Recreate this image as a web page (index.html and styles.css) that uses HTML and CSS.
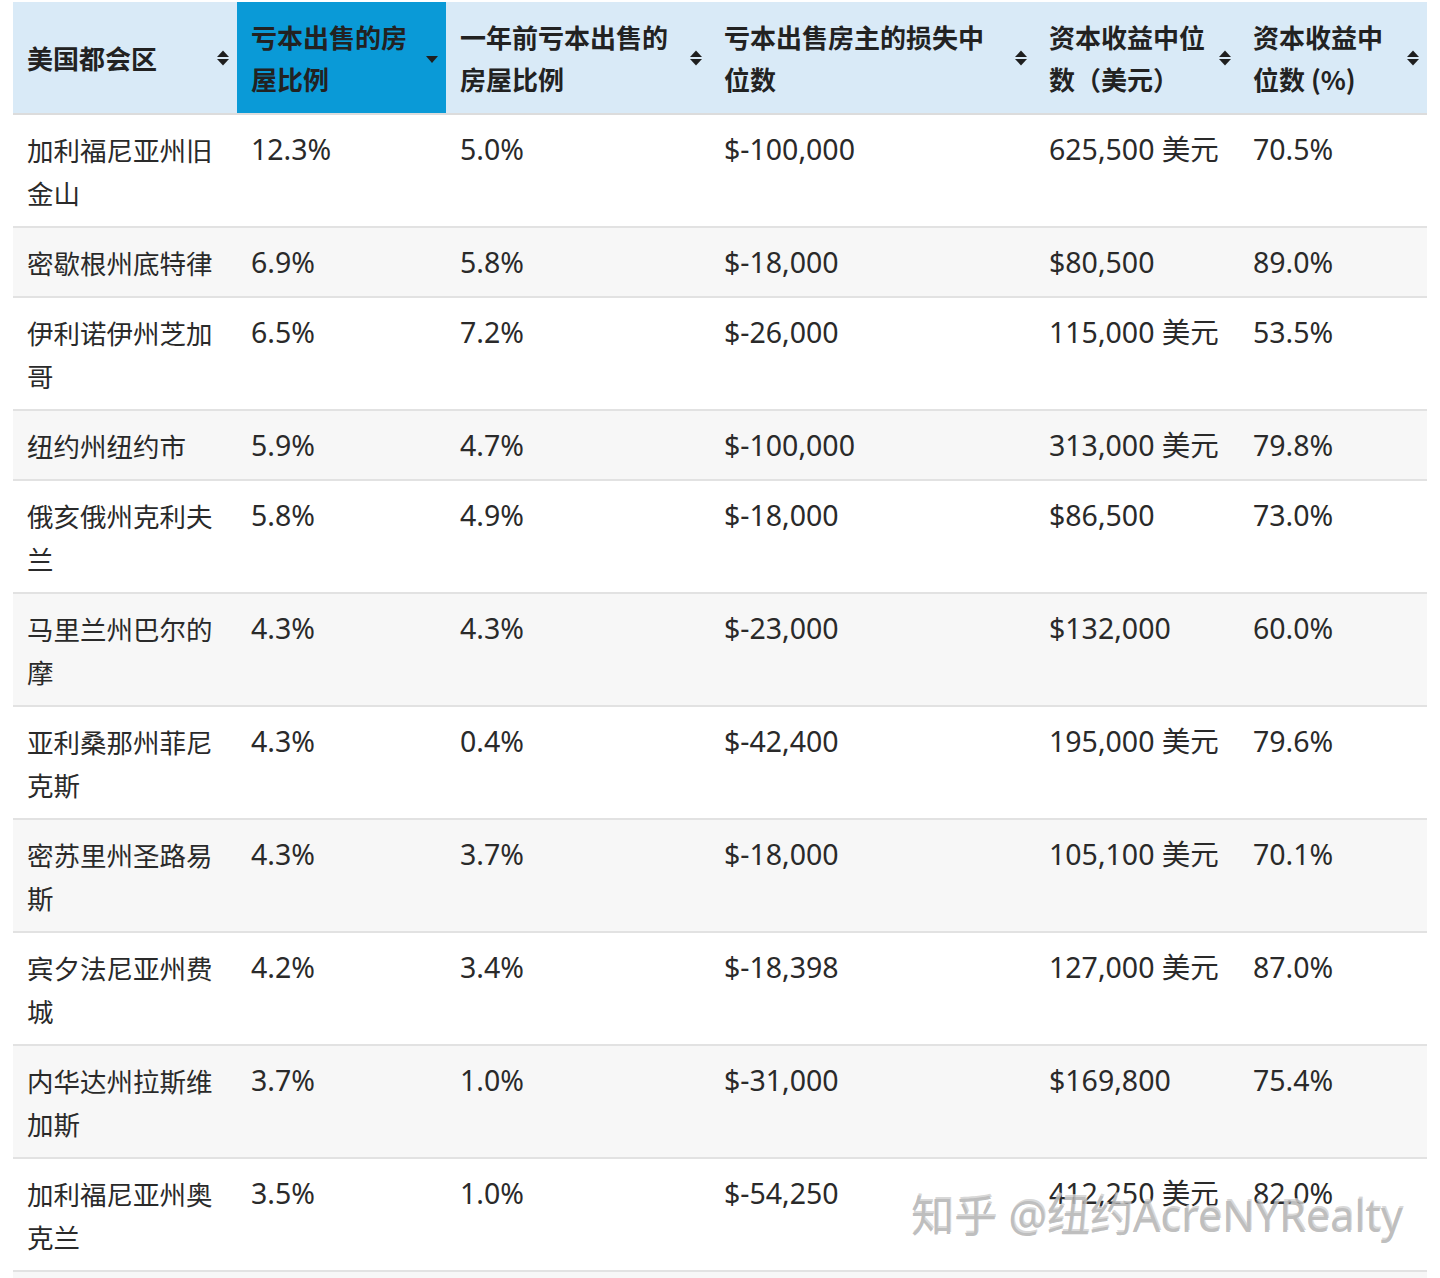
FILE: index.html
```html
<!DOCTYPE html>
<html lang="zh-CN">
<head>
<meta charset="utf-8">
<title>亏本出售的房屋比例</title>
<link rel="stylesheet" href="styles.css">
</head>
<body>
<div class="page">
  <table class="data">
    <colgroup>
      <col class="c1"><col class="c2"><col class="c3"><col class="c4"><col class="c5"><col class="c6">
    </colgroup>
    <thead>
      <tr>
        <th><div class="th-inner"><span class="label">美国都会区</span><svg class="sort" viewBox="0 0 12 16"><polygon points="0,7 6,0.5 12,7"/><polygon points="0,9 6,15.5 12,9"/></svg></div></th>
        <th class="active"><div class="th-inner"><span class="label">亏本出售的房屋比例</span><svg class="sort-down" viewBox="0 0 12 7"><polygon points="0,0 12,0 6,7"/></svg></div></th>
        <th><div class="th-inner"><span class="label">一年前亏本出售的房屋比例</span><svg class="sort" viewBox="0 0 12 16"><polygon points="0,7 6,0.5 12,7"/><polygon points="0,9 6,15.5 12,9"/></svg></div></th>
        <th><div class="th-inner"><span class="label">亏本出售房主的损失中位数</span><svg class="sort" viewBox="0 0 12 16"><polygon points="0,7 6,0.5 12,7"/><polygon points="0,9 6,15.5 12,9"/></svg></div></th>
        <th><div class="th-inner"><span class="label">资本收益中位数（美元）</span><svg class="sort" viewBox="0 0 12 16"><polygon points="0,7 6,0.5 12,7"/><polygon points="0,9 6,15.5 12,9"/></svg></div></th>
        <th><div class="th-inner"><span class="label">资本收益中位数 (%)</span><svg class="sort" viewBox="0 0 12 16"><polygon points="0,7 6,0.5 12,7"/><polygon points="0,9 6,15.5 12,9"/></svg></div></th>
      </tr>
    </thead>
    <tbody>
      <tr><td class="metro">加利福尼亚州旧金山</td><td>12.3%</td><td>5.0%</td><td>$-100,000</td><td>625,500 美元</td><td>70.5%</td></tr>
      <tr><td class="metro">密歇根州底特律</td><td>6.9%</td><td>5.8%</td><td>$-18,000</td><td>$80,500</td><td>89.0%</td></tr>
      <tr><td class="metro">伊利诺伊州芝加哥</td><td>6.5%</td><td>7.2%</td><td>$-26,000</td><td>115,000 美元</td><td>53.5%</td></tr>
      <tr><td class="metro">纽约州纽约市</td><td>5.9%</td><td>4.7%</td><td>$-100,000</td><td>313,000 美元</td><td>79.8%</td></tr>
      <tr><td class="metro">俄亥俄州克利夫兰</td><td>5.8%</td><td>4.9%</td><td>$-18,000</td><td>$86,500</td><td>73.0%</td></tr>
      <tr><td class="metro">马里兰州巴尔的摩</td><td>4.3%</td><td>4.3%</td><td>$-23,000</td><td>$132,000</td><td>60.0%</td></tr>
      <tr><td class="metro">亚利桑那州菲尼克斯</td><td>4.3%</td><td>0.4%</td><td>$-42,400</td><td>195,000 美元</td><td>79.6%</td></tr>
      <tr><td class="metro">密苏里州圣路易斯</td><td>4.3%</td><td>3.7%</td><td>$-18,000</td><td>105,100 美元</td><td>70.1%</td></tr>
      <tr><td class="metro">宾夕法尼亚州费城</td><td>4.2%</td><td>3.4%</td><td>$-18,398</td><td>127,000 美元</td><td>87.0%</td></tr>
      <tr><td class="metro">内华达州拉斯维加斯</td><td>3.7%</td><td>1.0%</td><td>$-31,000</td><td>$169,800</td><td>75.4%</td></tr>
      <tr><td class="metro">加利福尼亚州奥克兰</td><td>3.5%</td><td>1.0%</td><td>$-54,250</td><td>412,250 美元</td><td>82.0%</td></tr>
      <tr><td class="metro">&nbsp;</td><td>&nbsp;</td><td>&nbsp;</td><td>&nbsp;</td><td>&nbsp;</td><td>&nbsp;</td></tr>
    </tbody>
  </table>
  <div class="watermark">知乎 @纽约AcreNYRealty</div>
</div>
</body>
</html>
```

FILE: styles.css
```css
html, body {
  margin: 0;
  padding: 0;
  background: #ffffff;
}

body {
  font-family: "Noto Sans", "Noto Sans CJK SC", sans-serif;
  color: #2a2a2a;
}

.page {
  position: relative;
  padding: 2px 13px 0 13px;
  height: 1276px;
  overflow: hidden;
}

.data {
  width: 1414px;
  table-layout: fixed;
  border-collapse: collapse;
  border-spacing: 0;
}

.c1 { width: 224px; }
.c2 { width: 209px; }
.c3 { width: 264px; }
.c4 { width: 325px; }
.c5 { width: 204px; }
.c6 { width: 188px; }

.data th {
  background: #d9eaf7;
  padding: 14px 8px 13px 14px;
  text-align: left;
  vertical-align: middle;
  font-family: "Noto Sans CJK SC", "Noto Sans", sans-serif;
  font-weight: 700;
  font-size: 26px;
  line-height: 42px;
  color: #222222;
  border-bottom: 2px solid #dcdcdc;
}

.data th.active {
  background: #0a9ad7;
}

.th-inner {
  display: flex;
  align-items: center;
  gap: 6px;
}

.label {
  flex: 1;
  min-width: 0;
}

.sort {
  flex: none;
  width: 12px;
  height: 16px;
  fill: #1f1f1f;
}

.sort-down {
  flex: none;
  width: 12px;
  height: 7px;
  margin-top: 2px;
  fill: #1f1f1f;
}

.data td {
  padding: 13px 14px 12px 14px;
  vertical-align: top;
  font-size: 28.5px;
  line-height: 43px;
  color: #2a2a2a;
  border-bottom: 2px solid #e2e2e2;
}

.data td.metro {
  font-family: "Noto Sans CJK SC", sans-serif;
  font-size: 26.5px;
}

.data tbody tr:nth-child(even) td {
  background: #f7f7f7;
}

.watermark {
  position: absolute;
  left: 912px;
  top: 1188px;
  font-family: "Noto Sans", "Noto Sans CJK SC", sans-serif;
  font-size: 43px;
  line-height: 52px;
  white-space: nowrap;
  color: rgba(190, 190, 190, 0.6);
  text-shadow: -1px 2px 0 rgba(110, 110, 110, 0.45), 1px -1px 0 rgba(255, 255, 255, 0.6);
}
```
